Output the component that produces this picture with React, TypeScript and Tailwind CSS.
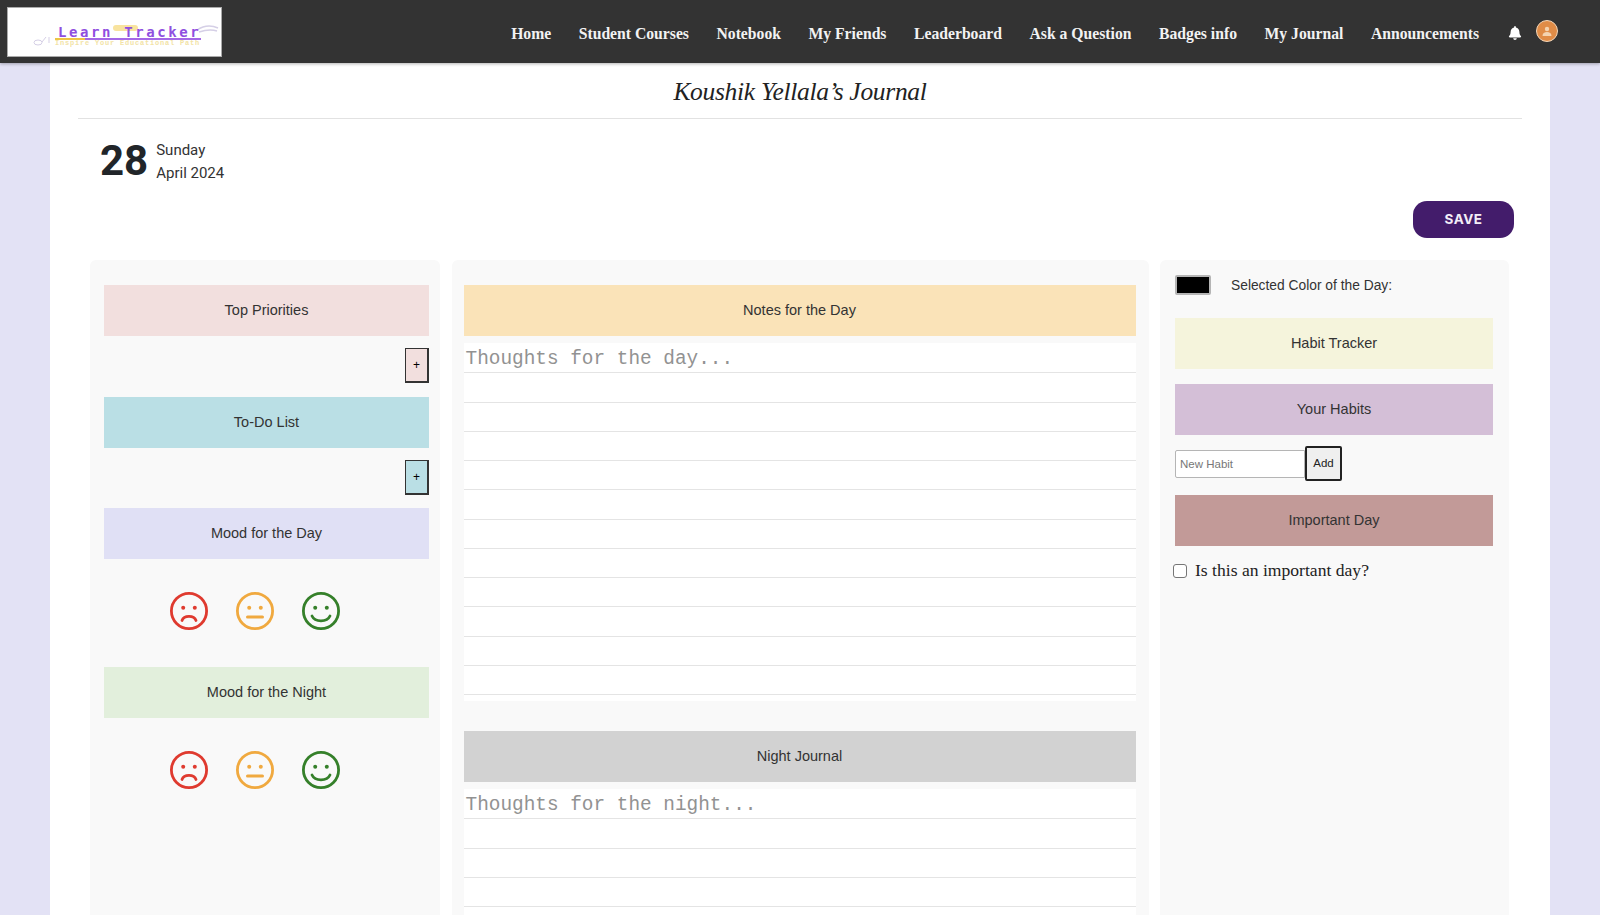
import { FaBell } from 'react-icons/fa';

const navLinks = ['Home', 'Student Courses', 'Notebook', 'My Friends', 'Leaderboard', 'Ask a Question', 'Badges info', 'My Journal', 'Announcements'];

function SectionHeader({ title, color }: { title: string; color: string }) {
  return (
    <div className={`flex h-[51px] items-center justify-center pt-px text-[14.5px] text-[#333] ${color}`}>
      {title}
    </div>
  );
}

function AddRow({ color }: { color: string }) {
  return (
    <div className="flex justify-end pb-[13.5px] pt-3">
      <button className={`flex h-[35px] w-6 items-center justify-center border border-b-2 border-r-2 border-[#333] text-[12px] leading-none text-black ${color}`}>
        +
      </button>
    </div>
  );
}

function Face({ kind }: { kind: 'sad' | 'neutral' | 'happy' }) {
  const color = kind === 'sad' ? '#df3a2f' : kind === 'neutral' ? '#f0a93f' : '#35802a';
  return (
    <svg width="40" height="40" viewBox="0 0 40 40" fill="none" stroke={color}>
      <circle cx="20" cy="20" r="17.6" strokeWidth="2.8" />
      <circle cx="14.2" cy="16.7" r="2" fill={color} stroke="none" />
      <circle cx="25.8" cy="16.7" r="2" fill={color} stroke="none" />
      {kind === 'sad' && <path d="M13 29.5c2-5.500 12-5.500 14 0" strokeWidth="2.800" strokeLinecap="round" />}
      {kind === 'neutral' && <path d="M12.500 26h15" strokeWidth="3" strokeLinecap="round" />}
      {kind === 'happy' && <path d="M11 25c3 6.500 15 6.500 18 0" strokeWidth="2.800" strokeLinecap="round" />}
    </svg>
  );
}

function Moods() {
  return (
    <div className="flex h-[108px] items-center justify-center gap-[26.300px] pb-[4px] pr-[23px]">
      <Face kind="sad" />
      <Face kind="neutral" />
      <Face kind="happy" />
    </div>
  );
}

function RuledPaper({ placeholder, rows }: { placeholder: string; rows: number }) {
  return (
    <div className="mt-[7px] bg-white pt-px">
      {Array.from({ length: rows }).map((_, i) => (
        <div key={i} className="h-[29.250px] border-b border-[#e4e4e4] pl-[2px] font-['Liberation_Mono',monospace] text-[19.400px] leading-[31px] text-[#929292]">
          {i === 0 ? placeholder : ''}
        </div>
      ))}
    </div>
  );
}

function Logo() {
  return (
    <div className="relative h-[50px] w-[215px] overflow-hidden border border-[#aaa] bg-white bg-[radial-gradient(#ececec_0.6px,transparent_0.6px)] bg-[length:8px_8px]">
      <div className="absolute left-[105px] top-[17px] h-[6px] w-[25px] rounded-sm bg-[#f8e39e]" />
      <svg className="absolute left-[25px] top-[27px]" width="18" height="11" viewBox="0 0 18 11" fill="none" stroke="#d5cfe6" strokeWidth="1">
        <ellipse cx="5" cy="7.500" rx="4" ry="2.500" />
        <path d="M9 7l4-5M16 2v6" />
      </svg>
      <svg className="absolute left-[188px] top-[16px]" width="23" height="9" viewBox="0 0 23 9" fill="none" stroke="#d5cfe6" strokeWidth="1.500">
        <path d="M1 6c6-4 14-5 21-2M3 8c6-2 12-3 18-1" />
      </svg>
      <div className="absolute left-[50px] top-[16px] whitespace-nowrap font-['DejaVu_Sans_Mono',monospace] text-[14px] font-bold leading-[16px] tracking-[2.600px] text-[#8f4fe0]">
        Learn Tracker
      </div>
      <div className="absolute left-[47px] top-[30px] h-[2px] w-[146px] bg-[#a467e6]">
        <div className="h-full w-[30px] bg-[#edc445]" />
      </div>
      <div className="absolute left-[47px] top-[31px] w-[150px] whitespace-nowrap font-['Liberation_Mono',monospace] text-[7px] font-bold leading-[9px] tracking-[0.800px] text-[#f2e3a6]">
        Inspire Your Educational Path
      </div>
    </div>
  );
}

function Navbar() {
  return (
    <nav className="relative z-10 flex h-[63px] items-center justify-between bg-[#333] pl-[7px] pr-[42px] shadow-[0_1px_3px_rgba(0,0,0,0.3)]">
      <Logo />
      <div className="flex items-center">
        <ul className="flex gap-[27.500px] pt-[4px] font-['Liberation_Serif',serif] text-[15.700px] font-bold text-[#f2f2f2]">
          {navLinks.map((link) => (
            <li key={link}>{link}</li>
          ))}
        </ul>
        <FaBell className="ml-[29px] mt-[3px] text-[14px] text-white" />
        <div className="ml-[14px] flex h-[22px] w-[22px] items-center justify-center rounded-full border border-[#f3d6b8] bg-[#e08c47]">
          <svg width="12" height="12" viewBox="0 0 12 12" fill="#f4d3b0">
            <circle cx="6" cy="4" r="2.200" />
            <path d="M1.500 11c0-3 2-4 4.500-4s4.500 1 4.500 4z" />
          </svg>
        </div>
      </div>
    </nav>
  );
}

export default function App() {
  return (
    <div className="h-screen overflow-hidden bg-[#e3e2f5] font-['Liberation_Sans',sans-serif]">
      <Navbar />
      <main className="mx-[50px] h-[852px] bg-white px-[28px]">
        <h1 className="flex h-[56px] items-center justify-center border-b border-[#e2e2e2] pt-[3px] font-['Liberation_Serif',serif] text-[25.500px] italic tracking-[-0.300px] text-[#222]">
          Koushik Yellala’s Journal
        </h1>

        <div className="flex h-[81px] items-start pl-[22px] pt-[20px]">
          <span className="font-['Roboto',sans-serif] text-[42px] font-bold leading-[44px] text-[#212529]">28</span>
          <div className="ml-[8px] font-['Roboto',sans-serif] text-[15px] leading-[22.500px] text-[#333]">
            <div>Sunday</div>
            <div>April 2024</div>
          </div>
        </div>

        <div className="flex h-[60px] justify-end pr-[8px] pt-px">
          <button className="h-[37px] w-[101px] rounded-[14px] bg-[#431c6b] font-['Inter',sans-serif] text-[13.500px] font-bold tracking-[0.500px] text-[#f3eef8]">
            SAVE
          </button>
        </div>

        <div className="grid h-[655px] grid-cols-[350px_697px_349px] gap-x-[11.500px] pl-[12px]">
          {/* Left column */}
          <section className="rounded-t-md bg-[#f9f9f9] pl-[14px] pr-[11px] pt-[25px]">
            <SectionHeader title="Top Priorities" color="bg-[#f2dfde]" />
            <AddRow color="bg-[#f2dfde]" />
            <SectionHeader title="To-Do List" color="bg-[#badfe5]" />
            <AddRow color="bg-[#badfe5]" />
            <SectionHeader title="Mood for the Day" color="bg-[#e0e0f5]" />
            <Moods />
            <SectionHeader title="Mood for the Night" color="bg-[#e2efdc]" />
            <Moods />
          </section>

          {/* Middle column */}
          <section className="rounded-t-md bg-[#f9f9f9] pl-[12px] pr-[13px] pt-[25px]">
            <SectionHeader title="Notes for the Day" color="bg-[#fae3b8]" />
            <RuledPaper placeholder="Thoughts for the day..." rows={12} />
            <div className="h-[6px] bg-white" />
            <div className="h-[30px]" />
            <SectionHeader title="Night Journal" color="bg-[#d2d2d2]" />
            <RuledPaper placeholder="Thoughts for the night..." rows={5} />
          </section>

          {/* Right column */}
          <section className="rounded-t-md bg-[#f9f9f9] pl-[15px] pr-[16px] pt-[15px]">
            <div className="flex h-[20px] items-center">
              <div className="h-[20px] w-[36px] rounded-[2px] border-2 border-[#b5b5b5] bg-black" />
              <span className="ml-[20px] pt-[2px] text-[13.800px] text-[#333]">Selected Color of the Day:</span>
            </div>
            <div className="mt-[23px] flex flex-col gap-[15px]">
              <SectionHeader title="Habit Tracker" color="bg-[#f5f4dc]" />
              <SectionHeader title="Your Habits" color="bg-[#d4bfd7]" />
            </div>
            <div className="mt-[11px] flex h-[35px] items-center">
              <input
                readOnly
                placeholder="New Habit"
                className="h-[28px] w-[130px] rounded-l-[2px] border border-[#b5b5b5] bg-white px-[4px] text-[11.500px] outline-none placeholder:text-[#777]"
              />
              <button className="h-[35px] w-[37px] rounded-[2px] border-2 border-[#222] bg-[#efefef] text-[11.500px] font-medium text-[#222]">
                Add
              </button>
            </div>
            <div className="mt-[14px]">
              <SectionHeader title="Important Day" color="bg-[#c29a98]" />
            </div>
            <label className="mt-[14px] flex h-[22px] items-center font-['Liberation_Serif',serif] text-[17.600px] text-[#222]">
              <input type="checkbox" readOnly className="ml-[-2px] h-[14px] w-[14px] appearance-none rounded-[3px] border border-[#767676] bg-white" />
              <span className="ml-[8px] mt-[-2px]">Is this an important day?</span>
            </label>
          </section>
        </div>
      </main>
    </div>
  );
}
